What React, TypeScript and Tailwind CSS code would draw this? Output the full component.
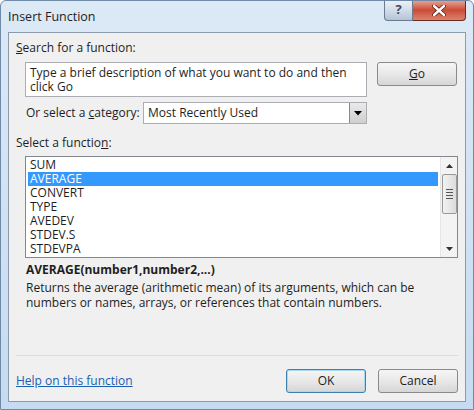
const functions = ["SUM", "AVERAGE", "CONVERT", "TYPE", "AVEDEV", "STDEV.S", "STDEVPA"];

const font = { fontFamily: '"Segoe UI", "Open Sans", sans-serif' };

const Btn: React.FC<{ children: React.ReactNode; focused?: boolean }> = ({
  children,
  focused,
}) => (
  <div
    className={`w-[80px] h-[24px] rounded-[3px] border flex items-center justify-center text-[12px] text-[#1e1e1e] bg-gradient-to-b from-[#f6f6f6] via-[#e8e8e8] to-[#d6d6d6] ${
      focused ? "border-[#3c7fb1] shadow-[inset_0_0_0_1px_#a8d8f2]" : "border-[#8a8a8a]"
    }`}
  >
    {children}
  </div>
);

export default function App() {
  return (
    <div
      className="w-[474px] h-[410px] bg-gradient-to-b from-[#dce9f6] to-[#c6dbf1] rounded-t-[6px] border border-[#6f8aa6] px-[7px] flex flex-col overflow-hidden"
      style={font}
    >
      {/* title bar */}
      <div className="h-[31px] flex items-start relative">
        <div className="pt-[7px] pl-[0px] text-[12.5px] text-[#1e1e1e]">Insert Function</div>
        <div className="absolute right-[0px] top-[-1px] flex">
          <div className="w-[29px] h-[21px] rounded-bl-[4px] border border-[#6b7b90] border-t-0 bg-gradient-to-b from-[#eef2f8] via-[#d3dde9] to-[#b4c3d5] flex items-center justify-center text-[13px] font-bold text-[#3b4c63]">
            ?
          </div>
          <div className="w-[53px] h-[21px] rounded-br-[4px] border border-[#6b2a1e] border-t-0 border-l-0 bg-gradient-to-b from-[#e9a89a] via-[#c94a34] to-[#d9836f] flex items-center justify-center">
            <svg width="14" height="11" viewBox="0 0 14 11">
              <path d="M2 1 L12 10 M12 1 L2 10" stroke="#5a1a10" strokeWidth="4" strokeLinecap="round" />
              <path d="M2 1 L12 10 M12 1 L2 10" stroke="#ffffff" strokeWidth="2.4" strokeLinecap="round" />
            </svg>
          </div>
        </div>
      </div>

      {/* panel */}
      <div className="h-[370px] bg-[#f0f0f0] border border-[#8c9bab] px-[7px] flex flex-col text-[12px] text-[#1e1e1e]">
        <div className="mt-[7px] h-[16px] leading-[16px]">
          <span className="underline">S</span>earch for a function:
        </div>

        <div className="mt-[6px] flex">
          <div className="ml-[9px] w-[342px] h-[35px] bg-white border border-[#abadb3] px-[4px] leading-[14px] pt-[3px]">
            Type a brief description of what you want to do and then click Go
          </div>
          <div className="ml-[10px]">
            <Btn>
              <span className="underline">G</span>o
            </Btn>
          </div>
        </div>

        <div className="mt-[5px] flex items-center h-[22px]">
          <div className="ml-[10px] w-[117px]">
            Or select a <span className="underline">c</span>ategory:
          </div>
          <div className="w-[224px] h-[22px] bg-white border border-[#abadb3] flex items-center justify-between">
            <span className="pl-[4px]">Most Recently Used</span>
            <div className="w-[17px] h-[20px] bg-gradient-to-b from-[#eaeaea] to-[#cfcfcf] border-l border-[#8a8a8a] flex items-center justify-center">
              <svg width="8" height="5" viewBox="0 0 8 5">
                <path d="M0 0 H8 L4 4.5 Z" fill="#000" />
              </svg>
            </div>
          </div>
        </div>

        <div className="mt-[11px] h-[16px] leading-[16px]">
          Select a functio<span className="underline">n</span>:
        </div>

        <div className="mt-[5px] ml-[9px] w-[433px] h-[102px] bg-white border border-[#828790] flex">
          <div className="flex-1 pt-[1px] px-[2px]">
            {functions.map((f, i) => (
              <div
                key={f}
                className={`h-[14px] leading-[14px] pl-[2px] ${
                  i === 1 ? "bg-[#3399ff] text-white" : ""
                }`}
              >
                {f}
              </div>
            ))}
          </div>
          <div className="w-[17px] bg-[#f3f3f3] border-l border-[#e6e6e6] flex flex-col items-center">
            <div className="h-[17px] flex items-center justify-center">
              <svg width="7" height="4" viewBox="0 0 7 4">
                <path d="M0 4 H7 L3.5 0 Z" fill="#333" />
              </svg>
            </div>
            <div className="w-[15px] h-[40px] rounded-[2px] border border-[#9a9a9a] bg-gradient-to-r from-[#f2f2f2] to-[#dcdcdc] flex flex-col items-center justify-center gap-[2px]">
              <div className="w-[7px] h-px bg-[#555]" />
              <div className="w-[7px] h-px bg-[#555]" />
              <div className="w-[7px] h-px bg-[#555]" />
              <div className="w-[7px] h-px bg-[#555]" />
            </div>
            <div className="flex-1" />
            <div className="h-[17px] flex items-center justify-center">
              <svg width="7" height="4" viewBox="0 0 7 4">
                <path d="M0 0 H7 L3.5 4 Z" fill="#333" />
              </svg>
            </div>
          </div>
        </div>

        <div className="mt-[4px] ml-[10px] h-[16px] leading-[16px] font-bold">
          AVERAGE(number1,number2,...)
        </div>
        <div className="mt-[2px] ml-[10px] leading-[15px] w-[400px]">
          Returns the average (arithmetic mean) of its arguments, which can be numbers or names,
          arrays, or references that contain numbers.
        </div>

        <div className="mt-[45px] h-px bg-[#dcdcdc]" />

        <div className="mt-[13px] flex items-center">
          <a className="text-[#1a5fb4] underline flex-1" href="#">
            Help on this function
          </a>
          <Btn focused>OK</Btn>
          <div className="ml-[12px]">
            <Btn>Cancel</Btn>
          </div>
        </div>
      </div>
    </div>
  );
}
